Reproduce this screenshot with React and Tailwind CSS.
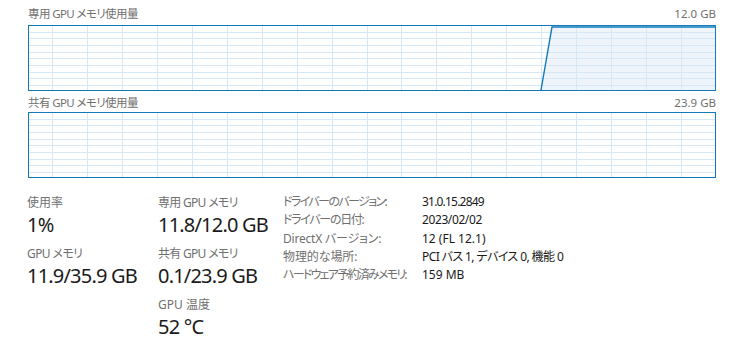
import React from 'react';

const font = "font-['Noto_Sans','Noto_Sans_CJK_JP',sans-serif] [font-feature-settings:'palt']";

function Graph({ data }) {
  const w = 686;
  const h = 64;
  const vx = [];
  for (let x = 23.5; x < w; x += 34.95) vx.push(Math.round(x - 0.5) + 0.5);
  const hy = [];
  for (let k = 1; k < 10; k++) hy.push(Math.round(5.67 + 6.67 * (k - 1)) + 0.5);
  return (
    <div className="h-[66px] w-[688px] border border-[#1279bc] bg-white">
      <svg width={w} height={h} className="block">
        {data && (
          <polygon points={data.map(p => p.join(',')).join(' ') + ` ${w},${h} ${data[0][0]},${h}`} fill="#eef4fa" />
        )}
        {vx.map(x => (
          <line key={'v' + x} x1={x} y1={0} x2={x} y2={h} stroke="#d6e8f5" strokeWidth="1" />
        ))}
        {hy.map(y => (
          <line key={'h' + y} x1={0} y1={y} x2={w} y2={y} stroke="#d6e8f5" strokeWidth="1" />
        ))}
        {data && (
          <polyline points={data.map(p => p.join(',')).join(' ')} fill="none" stroke="#1279bc" strokeWidth="1.4" />
        )}
      </svg>
    </div>
  );
}

function Stat({ label, value, tight }) {
  return (
    <div className="mb-[7px]">
      <div className={`text-[12px] leading-[16px] text-[#707070] ${tight}`}>{label}</div>
      <div className="text-[20px] leading-[28px] text-[#1a1a1a] tracking-[-0.8px]">{value}</div>
    </div>
  );
}

const info = [
  ['ドライバーのバージョン:', 'tracking-[-1.6px]', '31.0.15.2849', 'tracking-[-0.8px]'],
  ['ドライバーの日付:', 'tracking-[-1.3px]', '2023/02/02', 'tracking-[-0.4px]'],
  ['DirectX バージョン:', 'tracking-[-0.2px]', '12 (FL 12.1)', 'tracking-[0px]'],
  ['物理的な場所:', 'tracking-[-0.1px]', 'PCI バス 1, デバイス 0, 機能 0', 'tracking-[-0.6px]'],
  ['ハードウェア予約済みメモリ:', 'tracking-[-1.75px]', '159 MB', 'tracking-[0px]'],
];

export default function App() {
  return (
    <div className={`w-[740px] h-[358px] bg-white overflow-hidden ${font}`}>
      <div className="pl-[28px] pr-[24px]">
        <div className="mt-[6px] flex h-[16px] justify-between text-[11.5px] leading-[16px] text-[#707070]">
          <span className="tracking-[-0.6px]">専用 GPU メモリ使用量</span>
          <span>12.0 GB</span>
        </div>
        <div className="mt-[3px]">
          <Graph data={[[512, 64], [523, 1], [686, 1]]} />
        </div>
        <div className="mt-[4px] flex h-[16px] justify-between text-[11.5px] leading-[16px] text-[#707070]">
          <span className="tracking-[-0.6px]">共有 GPU メモリ使用量</span>
          <span>23.9 GB</span>
        </div>
        <div className="mt-[1px]">
          <Graph />
        </div>
      </div>

      <div className="mt-[17px] flex items-start pl-[27px]">
        <div className="w-[131px]">
          <Stat label="使用率" value="1%" tight="" />
          <Stat label="GPU メモリ" value="11.9/35.9 GB" tight="tracking-[-0.6px]" />
        </div>
        <div className="w-[125px]">
          <Stat label="専用 GPU メモリ" value="11.8/12.0 GB" tight="tracking-[-0.7px]" />
          <Stat label="共有 GPU メモリ" value="0.1/23.9 GB" tight="tracking-[-0.7px]" />
          <Stat label="GPU 温度" value="52 °C" tight="" />
        </div>
        <div className="-mt-[2px] grid grid-cols-[139px_auto] text-[12px] leading-[18.3px]">
          {info.map(([k, t, v, vt]) => (
            <React.Fragment key={k}>
              <div className={`whitespace-nowrap text-[#707070] ${t}`}>{k}</div>
              <div className={`whitespace-nowrap text-[#1a1a1a] ${vt}`}>{v}</div>
            </React.Fragment>
          ))}
        </div>
      </div>
    </div>
  );
}
